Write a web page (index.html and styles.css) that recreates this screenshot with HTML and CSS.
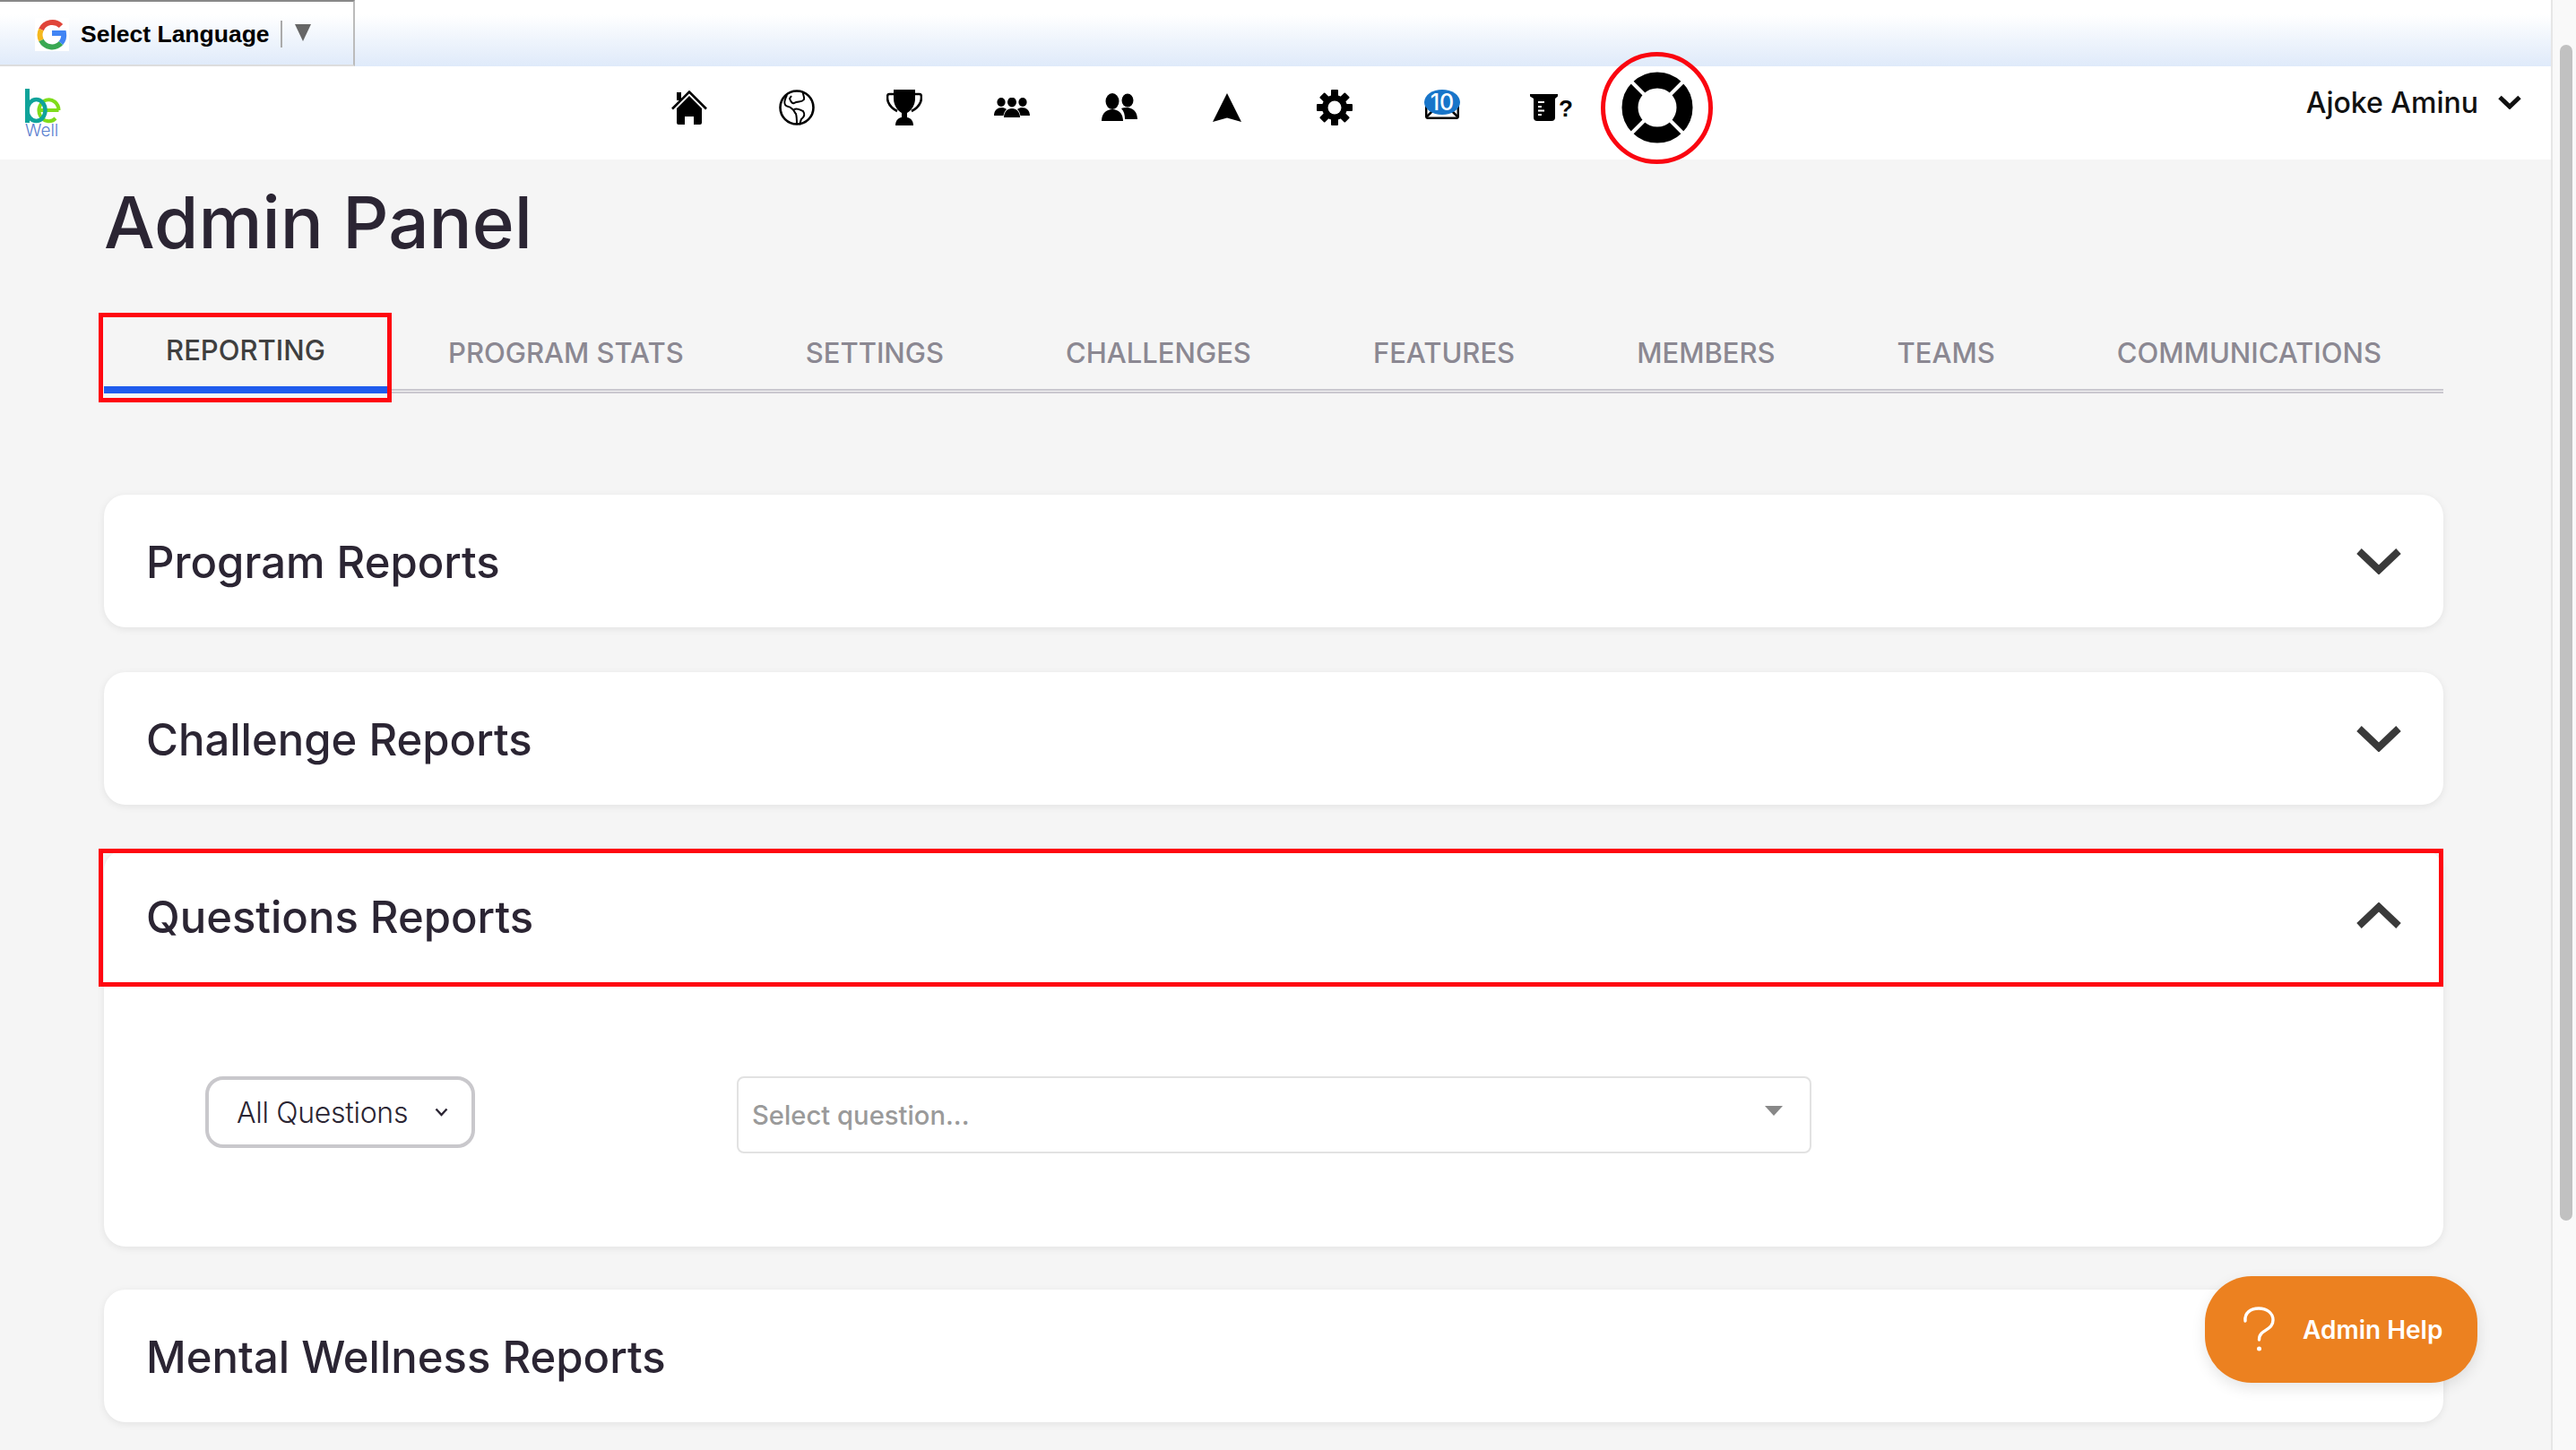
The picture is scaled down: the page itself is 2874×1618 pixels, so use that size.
FILE: index.html
```html
<!DOCTYPE html>
<html lang="en">
  <head>
    <meta charset="UTF-8" />
    <meta name="viewport" content="width=device-width, initial-scale=1.0" />
    <title>Admin Panel</title>
    <link rel="stylesheet" href="styles.css">
  </head>
  <body>
    <div class="page">
      <div class="translate-bar">
        <div class="translate-tab">
          <svg class="g-logo" viewBox="0 0 38 37">
            <rect width="38" height="37" fill="#fff" />
            <path d="M7 13 A13.5 13.5 0 0 1 29 9" fill="none" stroke="#e0453a" stroke-width="6" />
            <path d="M7 13 A13.5 13.5 0 0 0 7 25" fill="none" stroke="#f5b81e" stroke-width="6" />
            <path d="M7 25 A13.5 13.5 0 0 0 29 28" fill="none" stroke="#39a853" stroke-width="6" />
            <path d="M29 28 A13.5 13.5 0 0 0 32 17 L19 17" fill="none" stroke="#4285f4" stroke-width="6" />
          </svg>
          <span class="translate-label">Select Language</span>
          <span class="translate-divider"></span>
          <span class="translate-arrow"></span>
        </div>
      </div>

      <nav class="topnav">
        <div class="logo">
          <svg width="40" height="39" viewBox="0 0 40 39" fill="none">
            <path d="M37.500 24 A11 12 0 1 0 34 33 M15.500 24 H37.500" stroke="#7fdc1a" stroke-width="4" />
            <path d="M2.500 0 V38" stroke="#0fa39a" stroke-width="5" />
            <ellipse cx="12.500" cy="24" rx="10" ry="12" stroke="#0fa39a" stroke-width="4.500" />
          </svg>
          <div class="logo-well">Well</div>
        </div>
        <div class="nav-icons">
          <a class="nav-icon">
            <svg width="40" height="38" viewBox="0 0 40 38">
              <rect x="6" y="2" width="5" height="9" />
              <path d="M1 20.5 L20 1.5 L39 20.5" fill="none" stroke="#000" stroke-width="2.6" />
              <path d="M6 20 L20 6 L34 20 V36 Q34 38 32 38 H25 V29 H15 V38 H8 Q6 38 6 36 Z" />
            </svg>
          </a>
          <a class="nav-icon">
            <svg width="40" height="40" viewBox="0 0 40 40" fill="none" stroke="#000">
              <circle cx="20" cy="20" r="18.5" stroke-width="2.600" />
              <path d="M9 6 C7 10 5 14 7 17 C9 20 12 18 14 21 C17 22 17 25 19 27 C20 30 20 34 20 39" stroke-width="2" />
              <path d="M27 2 C26 5 29 8 28 11 C25 15 21 12 17 15 C15 16 13 13 12 10 L14 7" stroke-width="2" />
              <path d="M17 22 C21 20 24 23 27 24 C29 27 29 30 25 33 C24 35 24 37 23 39" stroke-width="2" />
            </svg>
          </a>
          <a class="nav-icon">
            <svg width="40" height="40" viewBox="0 0 40 40">
              <path d="M8 0 H32 V10 C32 18 27 24 23 26 L23 31 C25 31 30 33 30 40 H10 C10 33 15 31 17 31 L17 26 C13 24 8 18 8 10 Z" />
              <path d="M8 5 H3 C0 5 1 11 2 14 C4 19 8 22 12 24 M32 5 H37 C40 5 39 11 38 14 C36 19 32 22 28 24" fill="none" stroke="#000" stroke-width="2.6" />
            </svg>
          </a>
          <a class="nav-icon">
            <svg width="40" height="22" viewBox="0 0 40 22">
              <ellipse cx="8" cy="5" rx="4.6" ry="5" />
              <ellipse cx="20" cy="5" rx="5" ry="5.4" />
              <ellipse cx="32" cy="5" rx="4.6" ry="5" />
              <path d="M0 20 C0 14 4 11 9 11 C11 11 13 12 14 13 C12 15 11 17 10.500 20 Z" />
              <path d="M40 20 C40 14 36 11 31 11 C29 11 27 12 26 13 C28 15 29 17 29.500 20 Z" />
              <path d="M11 22 C11 16 15 12 20 12 C25 12 29 16 29 22 Z" />
            </svg>
          </a>
          <a class="nav-icon">
            <svg width="40" height="32" viewBox="0 0 40 32">
              <ellipse cx="12" cy="9" rx="7.500" ry="9" />
              <ellipse cx="29" cy="8" rx="6.500" ry="7.500" />
              <path d="M0 31 C0 23 5 18 12 18 C19 18 24 23 24 31 Z" />
              <path d="M22 17 C24 16 26 16 28 16 C35 16 40 21 40 29 H26 C26 24 25 20 22 17 Z" />
            </svg>
          </a>
          <a class="nav-icon">
            <svg width="32" height="32" viewBox="0 0 32 32">
              <path d="M16 0 L32 32 L16 27.500 L0 32 Z" />
            </svg>
          </a>
          <a class="nav-icon">
            <svg width="40" height="40" viewBox="0 0 40 40">
              <rect x="16" y="0" width="8" height="40" rx="1" />
              <rect x="16" y="0" width="8" height="40" rx="1" transform="rotate(45 20 20)" />
              <rect x="16" y="0" width="8" height="40" rx="1" transform="rotate(90 20 20)" />
              <rect x="16" y="0" width="8" height="40" rx="1" transform="rotate(135 20 20)" />
              <circle cx="20" cy="20" r="14" />
              <circle cx="20" cy="20" r="7.500" fill="#fff" />
            </svg>
          </a>
          <a class="nav-icon nav-mail">
            <svg width="38" height="24" viewBox="0 0 38 24" fill="none" stroke="#000" stroke-width="2.500">
              <rect x="1.200" y="1.200" width="35.600" height="21.600" rx="2" />
              <path d="M2 21 L14 9 M36 21 L24 9" />
            </svg>
            <span class="mail-badge">10</span>
          </a>
          <a class="nav-icon nav-quiz">
            <svg width="32" height="30" viewBox="0 0 32 30">
              <path d="M0 0 H31 V2.500 L28 5 V26 Q28 30 24 30 H8 Q4 30 4 26 V5 L0 2.500 Z" />
              <path d="M9 9 H16 M9 14 H13 M9 18.500 H16 M9 23 H13" stroke="#fff" stroke-width="2" />
            </svg>
            <span class="quiz-mark">?</span>
          </a>
          <a class="nav-icon nav-help">
            <svg width="80" height="80" viewBox="0 0 80 80">
              <circle cx="40" cy="40" r="30.500" fill="none" stroke="#000" stroke-width="18" />
              <path d="M11 11 L26 26 M69 11 L54 26 M11 69 L26 54 M69 69 L54 54" stroke="#fff" stroke-width="4" />
            </svg>
            <span class="annot-ring"></span>
          </a>
        </div>
        <div class="user-menu">
          <span>Ajoke Aminu</span>
          <svg width="26" height="16" viewBox="0 0 26 16" fill="none" stroke="#111" stroke-width="5">
            <path d="M2 2.500 L13 13 L24 2.500" />
          </svg>
        </div>
      </nav>

      <main class="content">
        <h1 class="page-title">Admin Panel</h1>

        <ul class="tabs">
          <li class="tab active">REPORTING<span class="annot-box annot-tab"></span></li>
          <li class="tab">PROGRAM STATS</li>
          <li class="tab">SETTINGS</li>
          <li class="tab">CHALLENGES</li>
          <li class="tab">FEATURES</li>
          <li class="tab">MEMBERS</li>
          <li class="tab">TEAMS</li>
          <li class="tab">COMMUNICATIONS</li>
        </ul>

        <section class="card">
          <div class="card-head">
            <h2>Program Reports</h2>
            <svg class="chevron" width="50" height="30" viewBox="0 0 50 30"><path d="M3 4 L25 25 L47 4" /></svg>
          </div>
        </section>

        <section class="card">
          <div class="card-head">
            <h2>Challenge Reports</h2>
            <svg class="chevron" width="50" height="30" viewBox="0 0 50 30"><path d="M3 4 L25 25 L47 4" /></svg>
          </div>
        </section>

        <section class="card open">
          <div class="card-head">
            <h2>Questions Reports</h2>
            <svg class="chevron" width="50" height="30" viewBox="0 0 50 30"><path d="M3 26 L25 5 L47 26" /></svg>
            <span class="annot-box annot-head"></span>
          </div>
          <div class="card-body">
            <div class="filter-btn">
              <span>All Questions</span>
              <svg width="15" height="10" viewBox="0 0 15 10" fill="none" stroke="#2b2533" stroke-width="2.400"><path d="M1.500 1.500 L7.500 8 L13.500 1.500" /></svg>
            </div>
            <div class="question-select">
              <span>Select question...</span>
              <span class="select-arrow"></span>
            </div>
          </div>
        </section>

        <section class="card">
          <div class="card-head">
            <h2>Mental Wellness Reports</h2>
          </div>
        </section>
      </main>

      <a class="help-btn">
        <svg width="36" height="52" viewBox="0 0 36 52" fill="none" stroke="#fff" stroke-width="3.400" stroke-linecap="round">
          <path d="M3 16 C2 7 9 2 18 2 C27 2 34 7 34 15 C34 24 26 25 21 30 C19 32 18.500 34 18.500 37" />
          <circle cx="18.500" cy="47" r="2.500" fill="#fff" stroke="none" />
        </svg>
        <span>Admin Help</span>
      </a>
    </div>

    <div class="scrollbar"><div class="scroll-thumb"></div></div>
  </body>
</html>
```

FILE: styles.css
```css
* {
  box-sizing: border-box;
}
html,
body {
  margin: 0;
  height: 100%;
  overflow: hidden;
}
body {
  display: flex;
  font-family: Inter, "Liberation Sans", sans-serif;
  color: #2b2533;
  background-color: #f5f5f5;
}
.page {
  position: relative;
  flex: 1;
  min-width: 0;
  height: 1618px;
}

/* google translate strip */
.translate-bar {
  height: 74px;
  background: linear-gradient(to bottom, #fff 0%, #fff 22%, #eef4fc 62%, #dfeafa 100%);
}
.translate-tab {
  display: flex;
  align-items: center;
  width: 396px;
  height: 74px;
  padding: 2px 0 0 39px;
  border-top: 2px solid #888;
  border-right: 2px solid #bbb;
  border-bottom: 2px solid #ddd;
}
.g-logo {
  width: 38px;
  height: 37px;
  margin-right: 13px;
}
.translate-label {
  font-family: "Liberation Sans", Arial, sans-serif;
  font-size: 26.500px;
  font-weight: 700;
  color: #000;
}
.translate-divider {
  width: 2px;
  height: 30px;
  margin: 0 14px 0 12px;
  background-color: #aaa;
}
.translate-arrow {
  width: 0;
  height: 0;
  margin-top: -3px;
  border-left: 9px solid transparent;
  border-right: 9px solid transparent;
  border-top: 19px solid #666;
}

/* top nav */
.topnav {
  display: flex;
  align-items: center;
  height: 104px;
  background-color: #fff;
}
.logo {
  width: 40px;
  height: 54px;
  margin-left: 28px;
}
.logo svg {
  display: block;
}
.logo-well {
  font-size: 19px;
  line-height: 15px;
  font-weight: 300;
  color: #5b80cf;
}
.nav-icons {
  display: flex;
  align-items: center;
  margin-left: 641px;
}
.nav-icon {
  position: relative;
  display: flex;
  align-items: center;
  justify-content: center;
  width: 120px;
  height: 104px;
  margin-top: -12px;
}
.nav-mail svg {
  margin-top: 2px;
}
.mail-badge {
  position: absolute;
  left: 40px;
  top: 32px;
  width: 40px;
  height: 28px;
  border-radius: 50%;
  background-color: #1875c9;
  color: #fff;
  font-size: 25px;
  font-weight: 500;
  line-height: 28px;
  text-align: center;
}
.quiz-mark {
  width: 12px;
  font-family: "Liberation Sans", Arial, sans-serif;
  font-size: 26px;
  font-weight: 700;
  text-align: center;
  color: #000;
  margin-top: 2px;
}
.annot-ring {
  position: absolute;
  left: -3px;
  top: -10px;
  width: 125px;
  height: 125px;
  border: 5px solid #fa0610;
  border-radius: 50%;
}
.user-menu {
  display: flex;
  align-items: center;
  gap: 22px;
  margin-left: auto;
  margin-right: 33px;
  margin-top: -24px;
  font-size: 32px;
  font-weight: 500;
  color: #111;
}

/* main content */
.content {
  padding: 0 120px 0 116px;
}
.page-title {
  margin: 0;
  padding-top: 22px;
  font-size: 80px;
  line-height: 96px;
  font-weight: 500;
  color: #2b2533;
}
.tabs {
  display: flex;
  align-items: flex-end;
  height: 143px;
  margin: 0 0 113px;
  padding: 0;
  list-style: none;
  border-bottom: 5px double #cac8cf;
}
.tab {
  position: relative;
  padding: 0 68px 20px 68px;
  font-size: 31px;
  line-height: 40px;
  font-weight: 500;
  white-space: nowrap;
  color: #8b8892;
}
.tab.active {
  width: 316px;
  margin-bottom: -5px;
  padding: 0 0 20px;
  text-align: center;
  color: #3f3f3f;
  border-bottom: 8px solid #205ced;
}
.annot-box {
  position: absolute;
  border: 5px solid #ff0610;
  pointer-events: none;
}
.annot-tab {
  left: -6px;
  right: -5px;
  top: -22px;
  bottom: -18px;
}
.card {
  margin-bottom: 50px;
  background-color: #fff;
  border-radius: 24px;
  box-shadow: 0 2px 8px rgba(0, 0, 0, 0.08);
}
.card.open {
  margin-bottom: 48px;
}
.card-head {
  position: relative;
  display: flex;
  align-items: center;
  justify-content: space-between;
  height: 148px;
  padding: 0 47px;
}
.card-head h2 {
  margin: 2px 0 0;
  font-size: 49px;
  font-weight: 500;
  color: #2b2533;
}
.chevron {
  fill: none;
  stroke: #3a3a3a;
  stroke-width: 8;
}
.annot-head {
  left: -6px;
  right: 0;
  top: -1px;
  bottom: -5px;
}
.card-body {
  display: flex;
  align-items: flex-start;
  height: 295px;
  padding: 105px 0 0 113px;
}
.filter-btn {
  display: flex;
  align-items: center;
  justify-content: space-between;
  width: 301px;
  height: 80px;
  padding: 0 26px 0 31px;
  margin-right: 292px;
  border: 4px solid #c9c8cc;
  border-radius: 20px;
  font-size: 32px;
  font-weight: 300;
  letter-spacing: -0.300px;
}
.question-select {
  position: relative;
  display: flex;
  align-items: center;
  width: 1199px;
  height: 86px;
  padding-left: 15px;
  border: 2px solid #e2e2e2;
  border-radius: 8px;
  font-size: 29.200px;
  font-weight: 500;
  color: #9a9a9a;
}
.select-arrow {
  position: absolute;
  right: 30px;
  top: 31px;
  width: 0;
  height: 0;
  border-left: 10px solid transparent;
  border-right: 10px solid transparent;
  border-top: 11px solid #888;
}

/* floating help */
.help-btn {
  position: absolute;
  left: 2460px;
  top: 1424px;
  display: flex;
  align-items: center;
  gap: 31px;
  width: 304px;
  height: 119px;
  padding-left: 42px;
  border-radius: 52px;
  background-color: #ec8120;
  box-shadow: 0 6px 16px rgba(0, 0, 0, 0.1);
  color: #fff;
  font-size: 28px;
  font-weight: 600;
}

/* fake browser scrollbar */
.scrollbar {
  width: 28px;
  height: 100%;
  padding: 50px 4px 0 8px;
  background-color: #f9f9f9;
  border-left: 2px solid #e6e6e6;
}
.scroll-thumb {
  height: 1312px;
  border-radius: 8px;
  background-color: #c1c1c1;
}
```
